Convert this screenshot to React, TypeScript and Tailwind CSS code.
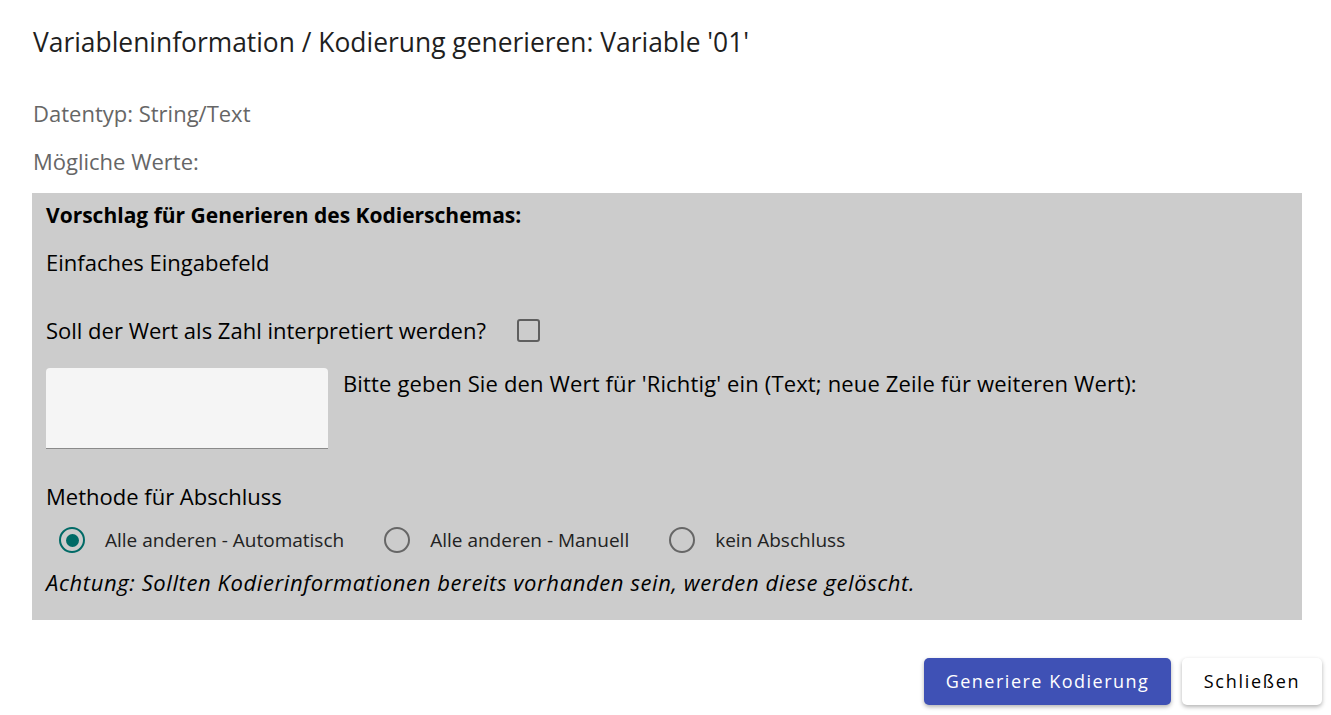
import { useState } from "react";

const font = { fontFamily: "'Open Sans', Lato, sans-serif" };

function Radio({ checked, label }: { checked: boolean; label: string }) {
  return (
    <label className="flex items-center gap-[20px] cursor-pointer">
      <span
        className={
          checked
            ? "flex h-[26px] w-[26px] items-center justify-center rounded-full border-[2.5px] border-[#006a66]"
            : "flex h-[26px] w-[26px] items-center justify-center rounded-full border-[2.5px] border-[#666666]"
        }
      >
        {checked && <span className="h-[13px] w-[13px] rounded-full bg-[#006a66]" />}
      </span>
      <span className="text-[19px] leading-[26px] text-[#222]">{label}</span>
    </label>
  );
}

export default function App() {
  const [value, setValue] = useState("");
  const [isNumber, setIsNumber] = useState(false);

  return (
    <div className="h-screen w-full bg-white pl-[32px] pt-[26px] text-[#1f1f1f]" style={font}>
      <h1 className="pl-[1px] text-[26.4px] leading-[32px] font-normal text-[#1f1f1f]">
        Variableninformation / Kodierung generieren: Variable '01'
      </h1>

      <p className="mt-[41px] pl-[1px] text-[22px] leading-[28px] text-[#666666]">Datentyp: String/Text</p>
      <p className="mt-[20px] pl-[1px] text-[22px] leading-[28px] text-[#666666]">Mögliche Werte:</p>

      <div className="mt-[18px] w-[1270px] bg-[#cccccc] pl-[14px] pt-[8px] pb-[24px]">
        <p className="text-[21px] leading-[28px] font-bold text-black">Vorschlag für Generieren des Kodierschemas:</p>
        <p className="mt-[19px] text-[22px] leading-[28px] text-black">Einfaches Eingabefeld</p>

        <div className="mt-[40px] flex items-center gap-[31px]">
          <span className="text-[22px] leading-[28px] text-black">Soll der Wert als Zahl interpretiert werden?</span>
          <button
            onClick={() => setIsNumber(!isNumber)}
            className="h-[23px] w-[23px] rounded-[3px] border-2 border-[#5f5f5f]"
          />
        </div>

        <div className="mt-[24px] flex items-start gap-[15px]">
          <textarea
            value={value}
            onChange={(e) => setValue(e.target.value)}
            className="h-[81px] w-[282px] resize-none rounded-t-[4px] border-b border-[#8a8a8a] bg-[#f5f5f5] px-3 py-2 outline-none"
          />
          <span className="mt-[1px] text-[22px] leading-[28px] tracking-[0.15px] text-black">
            Bitte geben Sie den Wert für 'Richtig' ein (Text; neue Zeile für weiteren Wert):
          </span>
        </div>

        <p className="mt-[33px] text-[22px] leading-[28px] text-black">Methode für Abschluss</p>

        <div className="mt-[17px] flex items-center gap-[40px] pl-[13px]">
          <Radio checked label="Alle anderen - Automatisch" />
          <Radio checked={false} label="Alle anderen - Manuell" />
          <Radio checked={false} label="kein Abschluss" />
        </div>

        <p className="mt-[15px] text-[22px] leading-[28px] tracking-[0.6px] italic text-black">
          Achtung: Sollten Kodierinformationen bereits vorhanden sein, werden diese gelöscht.
        </p>
      </div>

      <div className="mt-[38px] flex justify-end gap-[11px] pr-[9px]">
        <button className="h-[47px] w-[247px] rounded-[5px] bg-[#3f51b5] text-[18px] tracking-[1.5px] text-white shadow-[0_2px_4px_rgba(0,0,0,0.3)]">
          Generiere Kodierung
        </button>
        <button className="h-[47px] w-[140px] rounded-[5px] bg-white text-[18px] tracking-[1.7px] text-black shadow-[0_2px_4px_rgba(0,0,0,0.3)]">
          Schließen
        </button>
      </div>
    </div>
  );
}
